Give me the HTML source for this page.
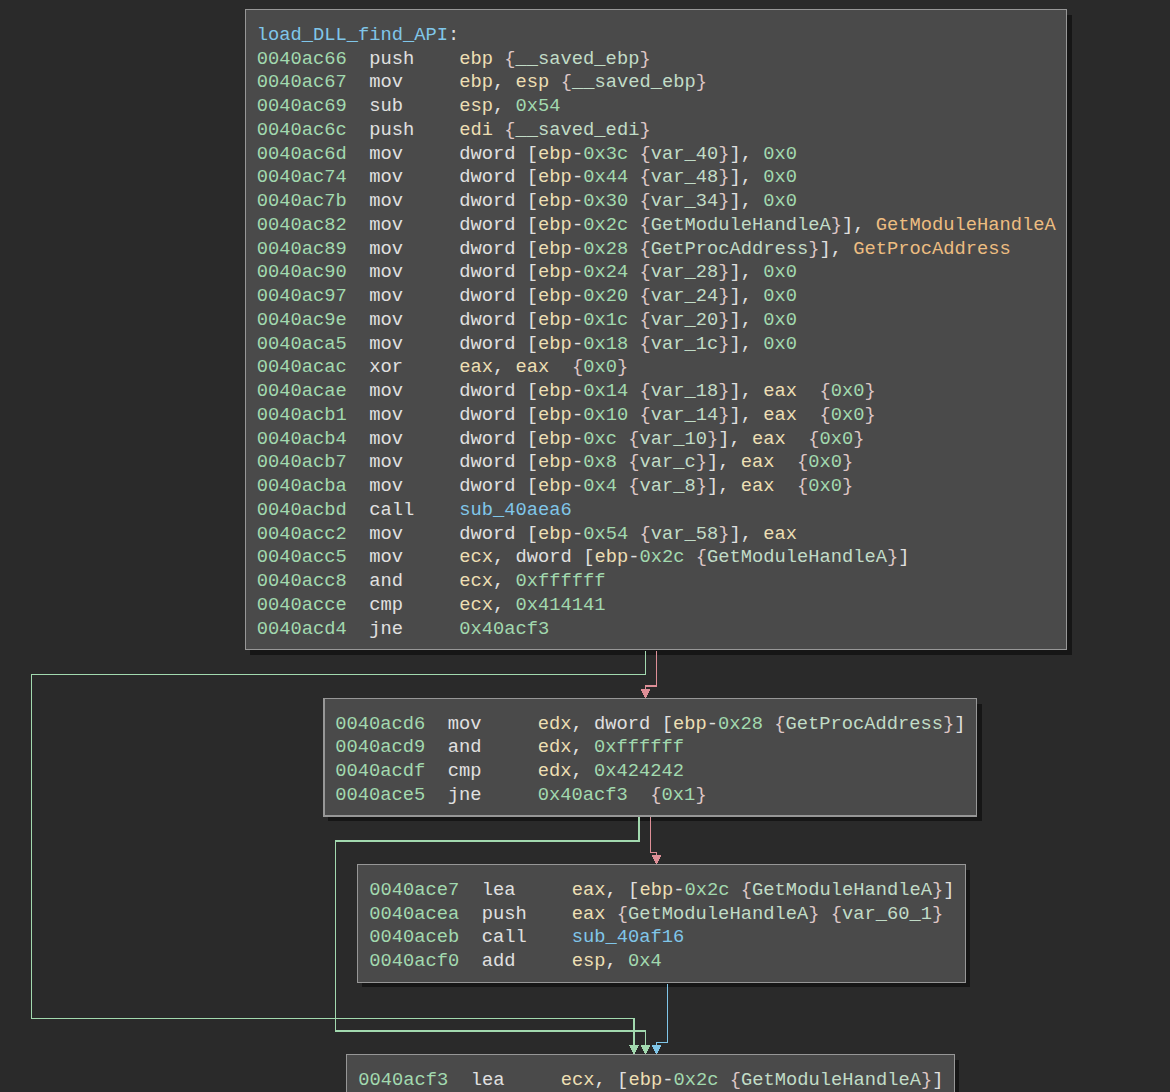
<!DOCTYPE html>
<html><head><meta charset="utf-8"><style>
html,body{margin:0;padding:0;background:#2a2a2a;width:1170px;height:1092px;overflow:hidden;}
.sh{position:absolute;background:#161616;}
.bx{position:absolute;box-sizing:border-box;background:#4a4a4a;border:1px solid #979797;}
pre{position:absolute;margin:0;font-family:"Liberation Mono",monospace;font-size:18.75px;line-height:23.75px;color:#e0e0e0;white-space:pre;}
svg{position:absolute;left:0;top:0;}
.a{color:#a2d9af}
.m{color:#e0e0e0}
.r{color:#eddfb3}
.n{color:#a2d9af}
.b{color:#dec6c6}
.v{color:#c1dcc7}
.i{color:#edbd81}
.f{color:#80c6e9}
.t{color:#e0e0e0}
</style></head><body>
<div class="sh" style="left:250px;top:15px;width:822px;height:640px"></div>
<div class="sh" style="left:328px;top:704px;width:654px;height:117px"></div>
<div class="sh" style="left:362px;top:870px;width:608px;height:117px"></div>
<div class="sh" style="left:351px;top:1060px;width:608px;height:141px"></div>
<svg width="1170" height="1092" shape-rendering="crispEdges">
<rect x="645" y="651" width="1" height="24" fill="#a2d9af"/>
<rect x="31" y="674" width="615" height="1" fill="#a2d9af"/>
<rect x="31" y="674" width="1" height="345" fill="#a2d9af"/>
<rect x="31" y="1018" width="604" height="1" fill="#a2d9af"/>
<rect x="633" y="1018" width="2" height="28" fill="#a2d9af"/>
<rect x="656" y="651" width="1" height="36" fill="#de8f97"/>
<rect x="645" y="685" width="12" height="2" fill="#de8f97"/>
<rect x="645" y="685" width="1" height="5" fill="#de8f97"/>
<rect x="638" y="817" width="2" height="25" fill="#a2d9af"/>
<rect x="335" y="840" width="305" height="2" fill="#a2d9af"/>
<rect x="335" y="840" width="1" height="192" fill="#a2d9af"/>
<rect x="335" y="1030" width="311" height="2" fill="#a2d9af"/>
<rect x="645" y="1030" width="1" height="16" fill="#a2d9af"/>
<rect x="650" y="817" width="1" height="36" fill="#de8f97"/>
<rect x="650" y="852" width="7" height="1" fill="#de8f97"/>
<rect x="656" y="852" width="1" height="4" fill="#de8f97"/>
<rect x="667" y="984" width="1" height="59" fill="#80c6e9"/>
<rect x="656" y="1042" width="12" height="1" fill="#80c6e9"/>
<rect x="656" y="1042" width="1" height="4" fill="#80c6e9"/>
<path d="M629.0 1045.0 H639.0 L634.0 1054.5 Z" fill="#a2d9af"/>
<path d="M640.5 689.0 H650.5 L645.5 698.5 Z" fill="#de8f97"/>
<path d="M640.5 1045.0 H650.5 L645.5 1054.5 Z" fill="#a2d9af"/>
<path d="M651.5 855.0 H661.5 L656.5 864.5 Z" fill="#de8f97"/>
<path d="M651.5 1045.0 H661.5 L656.5 1054.5 Z" fill="#80c6e9"/>
</svg>
<div class="bx" style="left:245px;top:9px;width:822px;height:641px"></div>
<pre style="left:256.75px;top:23.75px"><span class="f">load_DLL_find_API</span><span class="t">:</span>
<span class="a">0040ac66</span>  <span class="m">push</span>    <span class="r">ebp</span> <span class="b">{</span><span class="v">__saved_ebp</span><span class="b">}</span>
<span class="a">0040ac67</span>  <span class="m">mov</span>     <span class="r">ebp</span><span class="t">,</span> <span class="r">esp</span> <span class="b">{</span><span class="v">__saved_ebp</span><span class="b">}</span>
<span class="a">0040ac69</span>  <span class="m">sub</span>     <span class="r">esp</span><span class="t">,</span> <span class="n">0x54</span>
<span class="a">0040ac6c</span>  <span class="m">push</span>    <span class="r">edi</span> <span class="b">{</span><span class="v">__saved_edi</span><span class="b">}</span>
<span class="a">0040ac6d</span>  <span class="m">mov</span>     <span class="t">dword</span> <span class="t">[</span><span class="r">ebp</span><span class="t">-</span><span class="n">0x3c</span> <span class="b">{</span><span class="v">var_40</span><span class="b">}</span><span class="t">]</span><span class="t">,</span> <span class="n">0x0</span>
<span class="a">0040ac74</span>  <span class="m">mov</span>     <span class="t">dword</span> <span class="t">[</span><span class="r">ebp</span><span class="t">-</span><span class="n">0x44</span> <span class="b">{</span><span class="v">var_48</span><span class="b">}</span><span class="t">]</span><span class="t">,</span> <span class="n">0x0</span>
<span class="a">0040ac7b</span>  <span class="m">mov</span>     <span class="t">dword</span> <span class="t">[</span><span class="r">ebp</span><span class="t">-</span><span class="n">0x30</span> <span class="b">{</span><span class="v">var_34</span><span class="b">}</span><span class="t">]</span><span class="t">,</span> <span class="n">0x0</span>
<span class="a">0040ac82</span>  <span class="m">mov</span>     <span class="t">dword</span> <span class="t">[</span><span class="r">ebp</span><span class="t">-</span><span class="n">0x2c</span> <span class="b">{</span><span class="v">GetModuleHandleA</span><span class="b">}</span><span class="t">]</span><span class="t">,</span> <span class="i">GetModuleHandleA</span>
<span class="a">0040ac89</span>  <span class="m">mov</span>     <span class="t">dword</span> <span class="t">[</span><span class="r">ebp</span><span class="t">-</span><span class="n">0x28</span> <span class="b">{</span><span class="v">GetProcAddress</span><span class="b">}</span><span class="t">]</span><span class="t">,</span> <span class="i">GetProcAddress</span>
<span class="a">0040ac90</span>  <span class="m">mov</span>     <span class="t">dword</span> <span class="t">[</span><span class="r">ebp</span><span class="t">-</span><span class="n">0x24</span> <span class="b">{</span><span class="v">var_28</span><span class="b">}</span><span class="t">]</span><span class="t">,</span> <span class="n">0x0</span>
<span class="a">0040ac97</span>  <span class="m">mov</span>     <span class="t">dword</span> <span class="t">[</span><span class="r">ebp</span><span class="t">-</span><span class="n">0x20</span> <span class="b">{</span><span class="v">var_24</span><span class="b">}</span><span class="t">]</span><span class="t">,</span> <span class="n">0x0</span>
<span class="a">0040ac9e</span>  <span class="m">mov</span>     <span class="t">dword</span> <span class="t">[</span><span class="r">ebp</span><span class="t">-</span><span class="n">0x1c</span> <span class="b">{</span><span class="v">var_20</span><span class="b">}</span><span class="t">]</span><span class="t">,</span> <span class="n">0x0</span>
<span class="a">0040aca5</span>  <span class="m">mov</span>     <span class="t">dword</span> <span class="t">[</span><span class="r">ebp</span><span class="t">-</span><span class="n">0x18</span> <span class="b">{</span><span class="v">var_1c</span><span class="b">}</span><span class="t">]</span><span class="t">,</span> <span class="n">0x0</span>
<span class="a">0040acac</span>  <span class="m">xor</span>     <span class="r">eax</span><span class="t">,</span> <span class="r">eax</span>  <span class="b">{</span><span class="n">0x0</span><span class="b">}</span>
<span class="a">0040acae</span>  <span class="m">mov</span>     <span class="t">dword</span> <span class="t">[</span><span class="r">ebp</span><span class="t">-</span><span class="n">0x14</span> <span class="b">{</span><span class="v">var_18</span><span class="b">}</span><span class="t">]</span><span class="t">,</span> <span class="r">eax</span>  <span class="b">{</span><span class="n">0x0</span><span class="b">}</span>
<span class="a">0040acb1</span>  <span class="m">mov</span>     <span class="t">dword</span> <span class="t">[</span><span class="r">ebp</span><span class="t">-</span><span class="n">0x10</span> <span class="b">{</span><span class="v">var_14</span><span class="b">}</span><span class="t">]</span><span class="t">,</span> <span class="r">eax</span>  <span class="b">{</span><span class="n">0x0</span><span class="b">}</span>
<span class="a">0040acb4</span>  <span class="m">mov</span>     <span class="t">dword</span> <span class="t">[</span><span class="r">ebp</span><span class="t">-</span><span class="n">0xc</span> <span class="b">{</span><span class="v">var_10</span><span class="b">}</span><span class="t">]</span><span class="t">,</span> <span class="r">eax</span>  <span class="b">{</span><span class="n">0x0</span><span class="b">}</span>
<span class="a">0040acb7</span>  <span class="m">mov</span>     <span class="t">dword</span> <span class="t">[</span><span class="r">ebp</span><span class="t">-</span><span class="n">0x8</span> <span class="b">{</span><span class="v">var_c</span><span class="b">}</span><span class="t">]</span><span class="t">,</span> <span class="r">eax</span>  <span class="b">{</span><span class="n">0x0</span><span class="b">}</span>
<span class="a">0040acba</span>  <span class="m">mov</span>     <span class="t">dword</span> <span class="t">[</span><span class="r">ebp</span><span class="t">-</span><span class="n">0x4</span> <span class="b">{</span><span class="v">var_8</span><span class="b">}</span><span class="t">]</span><span class="t">,</span> <span class="r">eax</span>  <span class="b">{</span><span class="n">0x0</span><span class="b">}</span>
<span class="a">0040acbd</span>  <span class="m">call</span>    <span class="f">sub_40aea6</span>
<span class="a">0040acc2</span>  <span class="m">mov</span>     <span class="t">dword</span> <span class="t">[</span><span class="r">ebp</span><span class="t">-</span><span class="n">0x54</span> <span class="b">{</span><span class="v">var_58</span><span class="b">}</span><span class="t">]</span><span class="t">,</span> <span class="r">eax</span>
<span class="a">0040acc5</span>  <span class="m">mov</span>     <span class="r">ecx</span><span class="t">,</span> <span class="t">dword</span> <span class="t">[</span><span class="r">ebp</span><span class="t">-</span><span class="n">0x2c</span> <span class="b">{</span><span class="v">GetModuleHandleA</span><span class="b">}</span><span class="t">]</span>
<span class="a">0040acc8</span>  <span class="m">and</span>     <span class="r">ecx</span><span class="t">,</span> <span class="n">0xffffff</span>
<span class="a">0040acce</span>  <span class="m">cmp</span>     <span class="r">ecx</span><span class="t">,</span> <span class="n">0x414141</span>
<span class="a">0040acd4</span>  <span class="m">jne</span>     <span class="n">0x40acf3</span></pre>
<div class="bx" style="left:323px;top:698px;width:654px;height:119px;border-bottom-width:2px;border-left-width:2px"></div>
<pre style="left:335.25px;top:712.50px"><span class="a">0040acd6</span>  <span class="m">mov</span>     <span class="r">edx</span><span class="t">,</span> <span class="t">dword</span> <span class="t">[</span><span class="r">ebp</span><span class="t">-</span><span class="n">0x28</span> <span class="b">{</span><span class="v">GetProcAddress</span><span class="b">}</span><span class="t">]</span>
<span class="a">0040acd9</span>  <span class="m">and</span>     <span class="r">edx</span><span class="t">,</span> <span class="n">0xffffff</span>
<span class="a">0040acdf</span>  <span class="m">cmp</span>     <span class="r">edx</span><span class="t">,</span> <span class="n">0x424242</span>
<span class="a">0040ace5</span>  <span class="m">jne</span>     <span class="n">0x40acf3</span>  <span class="b">{</span><span class="n">0x1</span><span class="b">}</span></pre>
<div class="bx" style="left:357px;top:864px;width:609px;height:119px"></div>
<pre style="left:369.25px;top:878.75px"><span class="a">0040ace7</span>  <span class="m">lea</span>     <span class="r">eax</span><span class="t">,</span> <span class="t">[</span><span class="r">ebp</span><span class="t">-</span><span class="n">0x2c</span> <span class="b">{</span><span class="v">GetModuleHandleA</span><span class="b">}</span><span class="t">]</span>
<span class="a">0040acea</span>  <span class="m">push</span>    <span class="r">eax</span> <span class="b">{</span><span class="v">GetModuleHandleA</span><span class="b">}</span> <span class="b">{</span><span class="v">var_60_1</span><span class="b">}</span>
<span class="a">0040aceb</span>  <span class="m">call</span>    <span class="f">sub_40af16</span>
<span class="a">0040acf0</span>  <span class="m">add</span>     <span class="r">esp</span><span class="t">,</span> <span class="n">0x4</span></pre>
<div class="bx" style="left:346px;top:1054px;width:609px;height:147px"></div>
<pre style="left:358.25px;top:1068.75px"><span class="a">0040acf3</span>  <span class="m">lea</span>     <span class="r">ecx</span><span class="t">,</span> <span class="t">[</span><span class="r">ebp</span><span class="t">-</span><span class="n">0x2c</span> <span class="b">{</span><span class="v">GetModuleHandleA</span><span class="b">}</span><span class="t">]</span></pre>
</body></html>
